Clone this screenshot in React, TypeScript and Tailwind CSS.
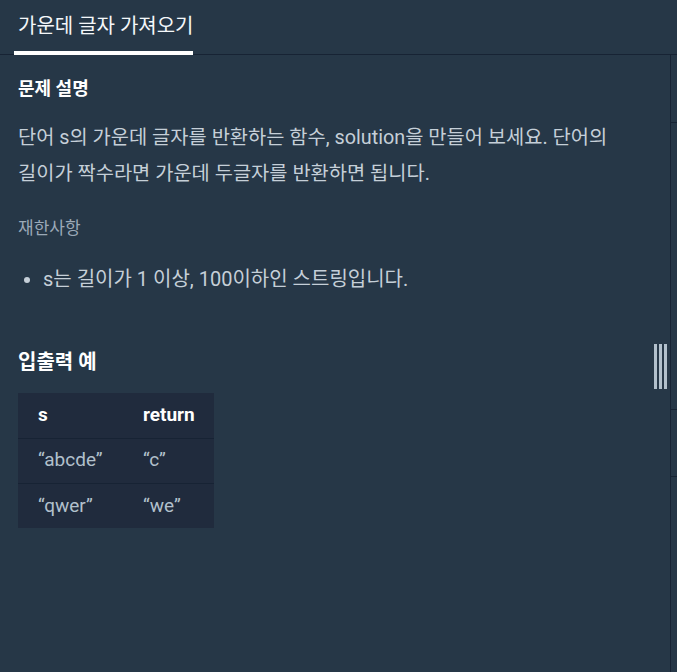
const font = "font-['Roboto','Noto_Sans_CJK_KR',sans-serif]";

const rows = [
  { s: "“abcde”", r: "“c”" },
  { s: "“qwer”", r: "“we”" },
];

export default function App() {
  return (
    <div className={`${font} h-[672px] w-[677px] overflow-hidden bg-[#263747] flex flex-col`}>
      {/* tab bar */}
      <div className="h-[55px] shrink-0 border-b border-[#172334] flex items-end">
        <div className="ml-[14px] w-[179px] px-[4px] h-[55px] flex items-start border-b-4 border-white -mb-px">
          <span className="mt-[11px] text-[20px] leading-[30px] text-[#f4f7fa] whitespace-nowrap">가운데 글자 가져오기</span>
        </div>
      </div>

      <div className="flex flex-1 min-h-0">
        {/* description */}
        <div className="relative flex-1 border-r border-[#172334] px-[18px] pt-[22px]">
          <h6 className="text-[18px] leading-[24px] font-bold text-white">문제 설명</h6>
          <p className="mt-[19px] break-keep text-[19.8px] leading-[36px] text-[#c5cfd8]">
            단어 s의 가운데 글자를 반환하는 함수, solution을 만들어 보세요. 단어의 길이가 짝수라면 가운데 두글자를 반환하면 됩니다.
          </p>
          <p className="mt-[22px] text-[17px] leading-[28px] text-[#9ba9b7]">재한사항</p>
          <ul className="mt-[23px] list-disc pl-[25px] text-[20px] leading-[28px] text-[#c5cfd8]">
            <li>s는 길이가 1 이상, 100이하인 스트링입니다.</li>
          </ul>
          <h5 className="mt-[55px] text-[20px] leading-[28px] font-bold text-white">입출력 예</h5>
          <table className="mt-[17px] w-[196px] table-fixed bg-[#202b3d] text-[19px] border-collapse">
            <thead>
              <tr className="border-b border-[#172334]">
                <th className="h-[45px] w-[125px] pl-[20px] text-left font-bold text-white">s</th>
                <th className="h-[45px] w-[71px] text-left font-bold text-white">return</th>
              </tr>
            </thead>
            <tbody>
              {rows.map((row, i) => (
                <tr key={i} className={i === 0 ? "border-b border-[#172334]" : ""}>
                  <td className="h-[45px] pl-[20px] text-[#b2c0cc]">{row.s}</td>
                  <td className="h-[45px] text-[#b2c0cc]">{row.r}</td>
                </tr>
              ))}
            </tbody>
          </table>

          {/* gutter handle */}
          <div className="absolute right-[3px] top-[289px] flex gap-[2px]">
            <div className="w-[3px] h-[45px] bg-[#b2c0cc]" />
            <div className="w-[3px] h-[45px] bg-[#b2c0cc]" />
            <div className="w-[3px] h-[45px] bg-[#b2c0cc]" />
          </div>
        </div>

        {/* right strip */}
        <div className="w-[6px] shrink-0 flex flex-col">
          <div className="h-[68px] border-b border-[#172334]" />
          <div className="h-[287px] border-b border-[#172334]" />
          <div className="h-[67px] border-b border-[#172334]" />
        </div>
      </div>
    </div>
  );
}
